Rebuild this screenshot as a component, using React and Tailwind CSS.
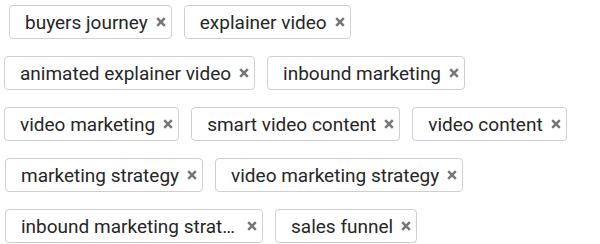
const ROWS = [
  { indent: 'pl-[9px]', tags: ['buyers journey', 'explainer video'] },
  { indent: 'pl-[4px]', tags: ['animated explainer video', 'inbound marketing'] },
  { indent: 'pl-[4px]', tags: ['video marketing', 'smart video content', 'video content'] },
  { indent: 'pl-[5px]', tags: ['marketing strategy', 'video marketing strategy'] },
  { indent: 'pl-[5px]', tags: ['inbound marketing strat…', 'sales funnel'], truncated: 0 },
];

function CloseIcon() {
  return (
    <svg width="10" height="10" viewBox="0 0 10 10" className="shrink-0">
      <path d="M1.2 1.2 L8.8 8.8 M8.8 1.2 L1.2 8.8" stroke="#767676" strokeWidth="2.5" strokeLinecap="butt" />
    </svg>
  );
}

function Tag({ label, wide }) {
  return (
    <div className="flex items-center h-[34px] pl-[15px] pr-[5px] bg-white border border-[#cfcfcf] rounded-[4px]">
      <span className="text-[19px] leading-none text-[#262626] whitespace-nowrap">{label}</span>
      <span className={wide ? 'ml-[12px]' : 'ml-[8px]'}><CloseIcon /></span>
    </div>
  );
}

export default function App() {
  return (
    <div className="w-[600px] h-[244px] bg-white pt-[5px] flex flex-col gap-[17px] overflow-hidden" style={{ fontFamily: 'Roboto, "Liberation Sans", sans-serif' }}>
      {ROWS.map((row, i) => (
        <div key={i} className={`flex gap-[12px] ${row.indent}`}>
          {row.tags.map((t, j) => (
            <Tag key={t} label={t} wide={row.truncated === j} />
          ))}
        </div>
      ))}
    </div>
  );
}
